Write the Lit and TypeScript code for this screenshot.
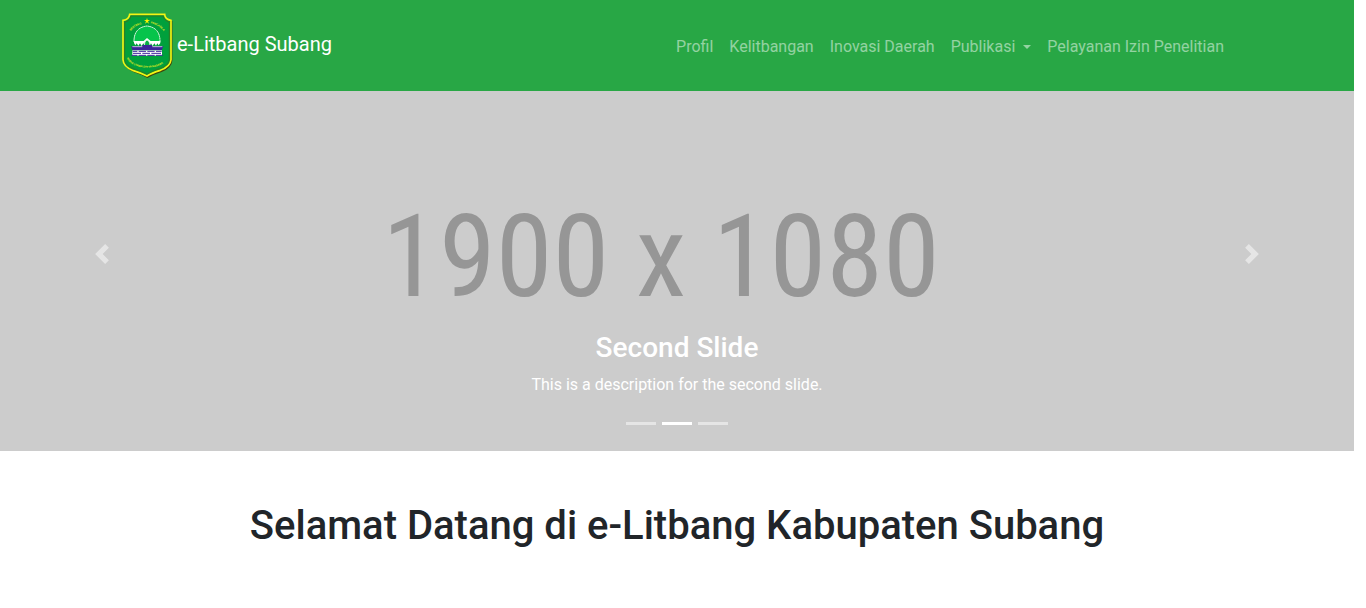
import { LitElement, html, css } from "lit";
import { customElement, state } from "lit/decorators.js";
import { classMap } from "lit/directives/class-map.js";

@customElement("subang-crest")
class SubangCrest extends LitElement {
  static styles = css`
    :host { display: block; }
    .crest { display: block; width: 51px; height: 65px; }
    .motto { font-family: "Liberation Sans", Arial, sans-serif; font-weight: 700; font-size: 8px; fill: #e6ee1c; }
  `;

  render() {
    return html`
      <svg class="crest" viewBox="0 0 153 195" role="img" aria-label="Lambang Kabupaten Subang">
        <path d="M26 6 H130 Q131 21 151 24 V143 Q149 165 119 177 Q93 185 76 195 Q61 186 36 178 Q6 166 4 142 V24 Q23 22 26 6Z"
          fill="#3f430a" />
        <path d="M23 4 H128 Q129 19 147 22 V140 Q145 161 115 172 Q89 180 75 189 Q60 181 34 173 Q4 161 3 140 V22 Q21 20 23 4Z"
          fill="#00a03c" stroke="#f4f414" stroke-width="5" />
        <path d="M27 9 H123 Q126 23 142 27 V139 Q141 157 112 167 Q88 175 75 183 Q61 176 37 168 Q9 158 8 139 V27 Q24 24 27 9Z"
          fill="none" stroke="#4e6413" stroke-width="2" />
        <path d="M75 15l2 6h7l-6 4 3 7-6-4-6 4 3-7-6-4h7z" fill="#fff200" />
        <path id="left" d="M26 54 Q38 36 69 31" fill="none" />
        <path id="right" d="M86 31 Q119 36 139 78" fill="none" />
        <text class="motto"><textPath href="#left">BENTENG</textPath></text>
        <text class="motto"><textPath href="#right">PANCASILA</textPath></text>
        <path d="M36 87 Q35 44 75 39 Q115 44 114 87Z" fill="#06c44b" stroke="#f4fff4" stroke-width="3" stroke-dasharray="5 1" />
        <path d="M36 84H65L75 75L86 84H115V90L110 97L106 91L102 98L97 91L92 99L87 91L81 100H70L64 91L59 99L54 91L49 98L44 91L40 97L36 90Z" fill="#fff" />
        <path d="M67 98Q67 84 75 81Q84 84 84 98Z" fill="#07ad43" stroke="#fff" stroke-width="2" />
        <path d="M27 100H61V96H90V100H124L119 112H32Z" fill="#3c249a" />
        <path d="M31 101H61M91 101H121" stroke="#fff" stroke-width="2" />
        <path d="M31 112H120V128H31Z" fill="#fff" />
        <path d="M32 115H46M50 115H72M76 115H98M102 115H119M33 121H57M61 121H84M88 121H117M29 127H46M50 127H72M76 127H98M102 127H122"
          stroke="#3c249a" stroke-width="3" />
        <path id="lower" d="M14 135 Q27 163 75 164 Q124 163 138 133" fill="none" />
        <text class="motto"><textPath href="#lower">KARYA UTAMA SATYA NAGARA</textPath></text>
      </svg>
    `;
  }
}

const slides = [
  { title: "First Slide", text: "This is a description for the first slide." },
  { title: "Second Slide", text: "This is a description for the second slide." },
  { title: "Third Slide", text: "This is a description for the third slide." },
];

@customElement("slide-carousel")
class SlideCarousel extends LitElement {
  @state() private active = 1;

  static styles = css`
    :host { display: block; }
    .carousel {
      position: relative;
      display: flex;
      flex-direction: column;
      justify-content: center;
      min-height: 360px;
      background: #ccc;
      color: #fff;
      text-align: center;
    }
    .size {
      padding: 0 32px 28px 0;
      font-family: "Roboto Condensed", "Liberation Sans Narrow", "Arial Narrow", sans-serif;
      font-size: 115px;
      line-height: 144px;
      color: #969696;
      white-space: nowrap;
    }
    .caption { position: absolute; left: 15%; right: 15%; bottom: 54px; }
    .title { margin: 0 0 8px; font-size: 28px; line-height: 34px; font-weight: 500; }
    .text { margin: 0; font-size: 16px; line-height: 24px; }
    .control {
      position: absolute;
      top: 0;
      bottom: 0;
      display: flex;
      align-items: center;
      justify-content: center;
      width: 15%;
      padding: 0 0 34px;
      border: 0;
      background: none;
      color: #fff;
      opacity: 0.5;
      cursor: pointer;
    }
    .control:hover { opacity: 0.9; }
    .prev { left: 0; }
    .next { right: 0; }
    .arrow { width: 20px; height: 20px; fill: currentColor; }
    .indicators {
      position: absolute;
      left: 15%;
      right: 15%;
      bottom: 16px;
      display: flex;
      justify-content: center;
      gap: 6px;
    }
    .indicator {
      width: 30px;
      height: 23px;
      padding: 10px 0;
      border: 0;
      background: #fff content-box;
      opacity: 0.5;
      cursor: pointer;
    }
    .indicator.active { opacity: 1; }
  `;

  private go(step: number) {
    this.active = (this.active + step + slides.length) % slides.length;
  }

  render() {
    const slide = slides[this.active];
    return html`
      <section class="carousel" aria-label="Slide">
        <div class="size">1900 x 1080</div>
        <div class="caption">
          <h3 class="title">${slide.title}</h3>
          <p class="text">${slide.text}</p>
        </div>
        <button class="control prev" aria-label="Previous" @click=${() => this.go(-1)}>
          <svg class="arrow" viewBox="0 0 8 8"><path d="M5.25 0l-4 4 4 4 1.5-1.5-2.5-2.5 2.5-2.5-1.5-1.5z" /></svg>
        </button>
        <button class="control next" aria-label="Next" @click=${() => this.go(1)}>
          <svg class="arrow" viewBox="0 0 8 8"><path d="M2.75 0l-1.5 1.5 2.5 2.5-2.5 2.5 1.5 1.5 4-4-4-4z" /></svg>
        </button>
        <div class="indicators">
          ${slides.map((s, i) => html`
            <button
              class=${classMap({ indicator: true, active: i === this.active })}
              aria-label=${s.title}
              @click=${() => { this.active = i; }}
            ></button>
          `)}
        </div>
      </section>
    `;
  }
}

@customElement("app-root")
class AppRoot extends LitElement {
  static styles = css`
    :host {
      display: block;
      padding-right: 12px;
      background: #fff;
      color: #212529;
      font-family: Roboto, "Liberation Sans", sans-serif;
      font-size: 16px;
      line-height: 24px;
    }
    .navbar { background: #28a745; padding: 13px 16px; }
    .container {
      display: flex;
      align-items: center;
      justify-content: space-between;
      max-width: 1110px;
      margin: 0 auto;
    }
    .brand {
      display: flex;
      align-items: center;
      gap: 4px;
      color: #fff;
      font-size: 20px;
      line-height: 30px;
      text-decoration: none;
      white-space: nowrap;
    }
    .brand-name { padding-bottom: 3px; }
    .links { display: flex; margin: 0; padding: 2px 0 0; list-style: none; }
    .link {
      display: flex;
      align-items: center;
      padding: 8px;
      border: 0;
      background: none;
      color: rgba(255, 255, 255, 0.5);
      font: inherit;
      text-decoration: none;
      white-space: nowrap;
      cursor: pointer;
    }
    .link:hover { color: rgba(255, 255, 255, 0.75); }
    .caret {
      margin-left: 8px;
      border: 4px solid transparent;
      border-top-color: currentColor;
      border-bottom: 0;
    }
    .welcome { padding: 51px 16px; text-align: center; }
    .heading { margin: 0; font-size: 40px; line-height: 48px; font-weight: 500; }
  `;

  render() {
    return html`
      <nav class="navbar">
        <div class="container">
          <a class="brand" href="#">
            <subang-crest></subang-crest>
            <span class="brand-name">e-Litbang Subang</span>
          </a>
          <ul class="links">
            <li><a class="link" href="#profil">Profil</a></li>
            <li><a class="link" href="#kelitbangan">Kelitbangan</a></li>
            <li><a class="link" href="#inovasi">Inovasi Daerah</a></li>
            <li><button class="link" aria-haspopup="true">Publikasi<span class="caret"></span></button></li>
            <li><a class="link" href="#izin">Pelayanan Izin Penelitian</a></li>
          </ul>
        </div>
      </nav>
      <slide-carousel></slide-carousel>
      <main class="welcome">
        <h1 class="heading">Selamat Datang di e-Litbang Kabupaten Subang</h1>
      </main>
    `;
  }
}
